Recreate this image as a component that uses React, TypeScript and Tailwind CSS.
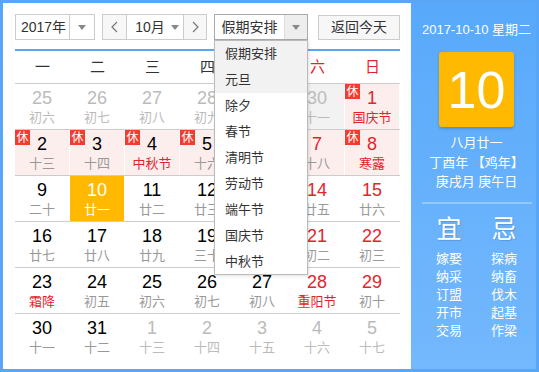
type Cell = {
  d: number;
  l: string;
  other?: boolean;
  red?: boolean;
  tag?: '休' | '班';
  sel?: boolean;
};

const font = { fontFamily: '"Liberation Sans", "Noto Sans CJK SC", sans-serif' };

const weeks: Cell[][] = [
  [
    { d: 25, l: '初六', other: true },
    { d: 26, l: '初七', other: true },
    { d: 27, l: '初八', other: true },
    { d: 28, l: '初九', other: true },
    { d: 29, l: '初十', other: true },
    { d: 30, l: '十一', other: true, tag: '班' },
    { d: 1, l: '国庆节', red: true, tag: '休' },
  ],
  [
    { d: 2, l: '十三', tag: '休' },
    { d: 3, l: '十四', tag: '休' },
    { d: 4, l: '中秋节', red: true, tag: '休' },
    { d: 5, l: '十六', tag: '休' },
    { d: 6, l: '十七', tag: '休' },
    { d: 7, l: '十八', tag: '休' },
    { d: 8, l: '寒露', red: true, tag: '休' },
  ],
  [
    { d: 9, l: '二十' },
    { d: 10, l: '廿一', sel: true },
    { d: 11, l: '廿二' },
    { d: 12, l: '廿三' },
    { d: 13, l: '廿四' },
    { d: 14, l: '廿五' },
    { d: 15, l: '廿六' },
  ],
  [
    { d: 16, l: '廿七' },
    { d: 17, l: '廿八' },
    { d: 18, l: '廿九' },
    { d: 19, l: '三十' },
    { d: 20, l: '初一' },
    { d: 21, l: '初二' },
    { d: 22, l: '初三' },
  ],
  [
    { d: 23, l: '霜降', red: true },
    { d: 24, l: '初五' },
    { d: 25, l: '初六' },
    { d: 26, l: '初七' },
    { d: 27, l: '初八' },
    { d: 28, l: '重阳节', red: true },
    { d: 29, l: '初十' },
  ],
  [
    { d: 30, l: '十一' },
    { d: 31, l: '十二' },
    { d: 1, l: '十三', other: true },
    { d: 2, l: '十四', other: true },
    { d: 3, l: '十五', other: true },
    { d: 4, l: '十六', other: true },
    { d: 5, l: '十七', other: true },
  ],
];

const holidays = ['假期安排', '元旦', '除夕', '春节', '清明节', '劳动节', '端午节', '国庆节', '中秋节'];
const yi = ['嫁娶', '纳采', '订盟', '开市', '交易'];
const ji = ['探病', '纳畜', '伐木', '起基', '作梁'];

const Caret = () => (
  <svg width="8" height="5" viewBox="0 0 8 5">
    <path d="M0 0h8L4 5z" fill="#888" />
  </svg>
);

const Chevron = ({ left }: { left?: boolean }) => (
  <svg width="7" height="12" viewBox="0 0 7 12">
    <path d={left ? 'M6 1L1 6l5 5' : 'M1 1l5 5-5 5'} fill="none" stroke="#777" strokeWidth="1.2" />
  </svg>
);

const DayCell = ({ c, col }: { c: Cell; col: number }) => {
  const weekend = col >= 5;
  let bg = 'bg-white';
  if (c.sel) bg = 'bg-[#ffb900]';
  else if (c.tag === '休') bg = 'bg-[#fdeeee]';
  else if (c.tag === '班') bg = 'bg-[#f2f2f2]';

  let num = 'text-black';
  let lunar = 'text-[#999]';
  if (c.other) {
    num = 'text-[#bbb]';
    lunar = 'text-[#bbb]';
  } else if (c.sel) {
    num = 'text-white';
    lunar = 'text-white';
  } else {
    if (weekend) num = 'text-[#e3242b]';
    if (c.red) lunar = 'text-[#e3242b]';
  }

  return (
    <div className={`relative h-[45px] flex flex-col items-center pt-[4px] border-r border-white ${bg}`}>
      {c.tag && (
        <span
          className={`absolute left-0 top-0 w-[15px] h-[15px] flex items-center justify-center text-[12px] leading-none text-white ${
            c.tag === '休' ? 'bg-[#f23c2f]' : 'bg-[#888]'
          }`}
        >
          {c.tag}
        </span>
      )}
      <span className={`text-[18px] leading-[20px] ${num}`}>{c.d}</span>
      <span className={`text-[13px] leading-[16px] mt-[2px] ${lunar}`}>{c.l}</span>
    </div>
  );
};

export default function App() {
  return (
    <div
      className="w-[539px] h-[372px] border-[3px] border-[#5aa6f6] flex bg-white text-[#333]"
      style={font}
    >
      <div className="flex-1 pl-[12px] pt-[11px]">
        <div className="w-[385px]">
          {/* toolbar */}
          <div className="relative flex items-center h-[26px] text-[14px]">
            <div className="flex h-[26px] w-[80px] border border-[#ccc]">
              <span className="flex-1 flex items-center justify-center pl-[2px]">2017年</span>
              <span className="w-[25px] border-l border-[#ccc] flex items-center justify-center">
                <Caret />
              </span>
            </div>
            <div className="flex h-[26px] w-[105px] ml-[7px] border border-[#ccc]">
              <span className="w-[23px] bg-[#f7f7f7] flex items-center justify-center">
                <Chevron left />
              </span>
              <span className="flex-1 border-l border-r border-[#ccc] flex items-center justify-center gap-[6px] pl-[4px]">
                10月
                <Caret />
              </span>
              <span className="w-[22px] bg-[#f7f7f7] flex items-center justify-center">
                <Chevron />
              </span>
            </div>
            <div className="flex h-[26px] w-[94px] ml-[7px] border border-[#aaa]">
              <span className="flex-1 flex items-center justify-center">假期安排</span>
              <span className="w-[23px] bg-[#eee] border-l border-[#ddd] flex items-center justify-center">
                <Caret />
              </span>
            </div>
            <button className="h-[25px] w-[82px] ml-[10px] border border-[#ccc] bg-[#f7f7f7] text-[14px] text-[#333]">
              返回今天
            </button>

            {/* open holiday menu */}
            <div className="absolute left-[199px] top-[26px] z-10 w-[94px] h-[235px] border border-[#bbb] bg-white shadow-[1px_1px_3px_rgba(0,0,0,0.12)] text-[13px] text-[#333]">
              {holidays.map((h, i) => (
                <div
                  key={h}
                  className={`h-[26px] leading-[26px] pl-[10px] ${i < 2 ? 'bg-[#f2f2f2]' : ''}`}
                >
                  {h}
                </div>
              ))}
            </div>
          </div>

          <div className="mt-[9px] h-[2px] bg-[#5aa6f6]" />

          {/* weekday header */}
          <div className="grid grid-cols-7 h-[33px] border-b border-[#ccc] text-[15px]">
            {['一', '二', '三', '四', '五', '六', '日'].map((w, i) => (
              <span key={w} className={`flex items-center justify-center ${i >= 5 ? 'text-[#e3242b]' : 'text-[#333]'}`}>
                {w}
              </span>
            ))}
          </div>

          {/* days */}
          {weeks.map((row, r) => (
            <div key={r} className={`grid grid-cols-7 ${r < 5 ? 'border-b border-[#ccc]' : ''}`}>
              {row.map((c, i) => (
                <DayCell key={i} c={c} col={i} />
              ))}
            </div>
          ))}
        </div>
      </div>

      {/* right panel */}
      <div className="w-[125px] h-full bg-gradient-to-b from-[#58a9fb] to-[#74b8fd] text-white pl-[6px] flex flex-col items-center">
        <div className="mt-[18px] text-[13px] leading-[18px] whitespace-nowrap">2017-10-10 星期二</div>
        <div className="mt-[13px] w-[75px] h-[75px] rounded-[3px] bg-[#ffb900] shadow-[0_2px_3px_rgba(0,0,0,0.18)] flex items-center justify-center text-[52px] leading-none">
          10
        </div>
        <div className="mt-[6px] text-[13px] leading-[19.5px] text-center whitespace-nowrap">
          <div>八月廿一</div>
          <div>丁酉年 【鸡年】</div>
          <div>庚戌月 庚午日</div>
        </div>
        <div className="mt-[10px] w-[110px] h-[2px] bg-white/30" />
        <div className="mt-[12px] grid grid-cols-2 w-[110px] text-center">
          <div className="text-[25px] leading-[26px] [text-shadow:1px_1px_1px_rgba(0,0,0,0.15)]">宜</div>
          <div className="text-[25px] leading-[26px] [text-shadow:1px_1px_1px_rgba(0,0,0,0.15)]">忌</div>
          <div className="mt-[8px] text-[13px] leading-[18px]">
            {yi.map((t) => (
              <div key={t}>{t}</div>
            ))}
          </div>
          <div className="mt-[8px] text-[13px] leading-[18px]">
            {ji.map((t) => (
              <div key={t}>{t}</div>
            ))}
          </div>
        </div>
      </div>
    </div>
  );
}
